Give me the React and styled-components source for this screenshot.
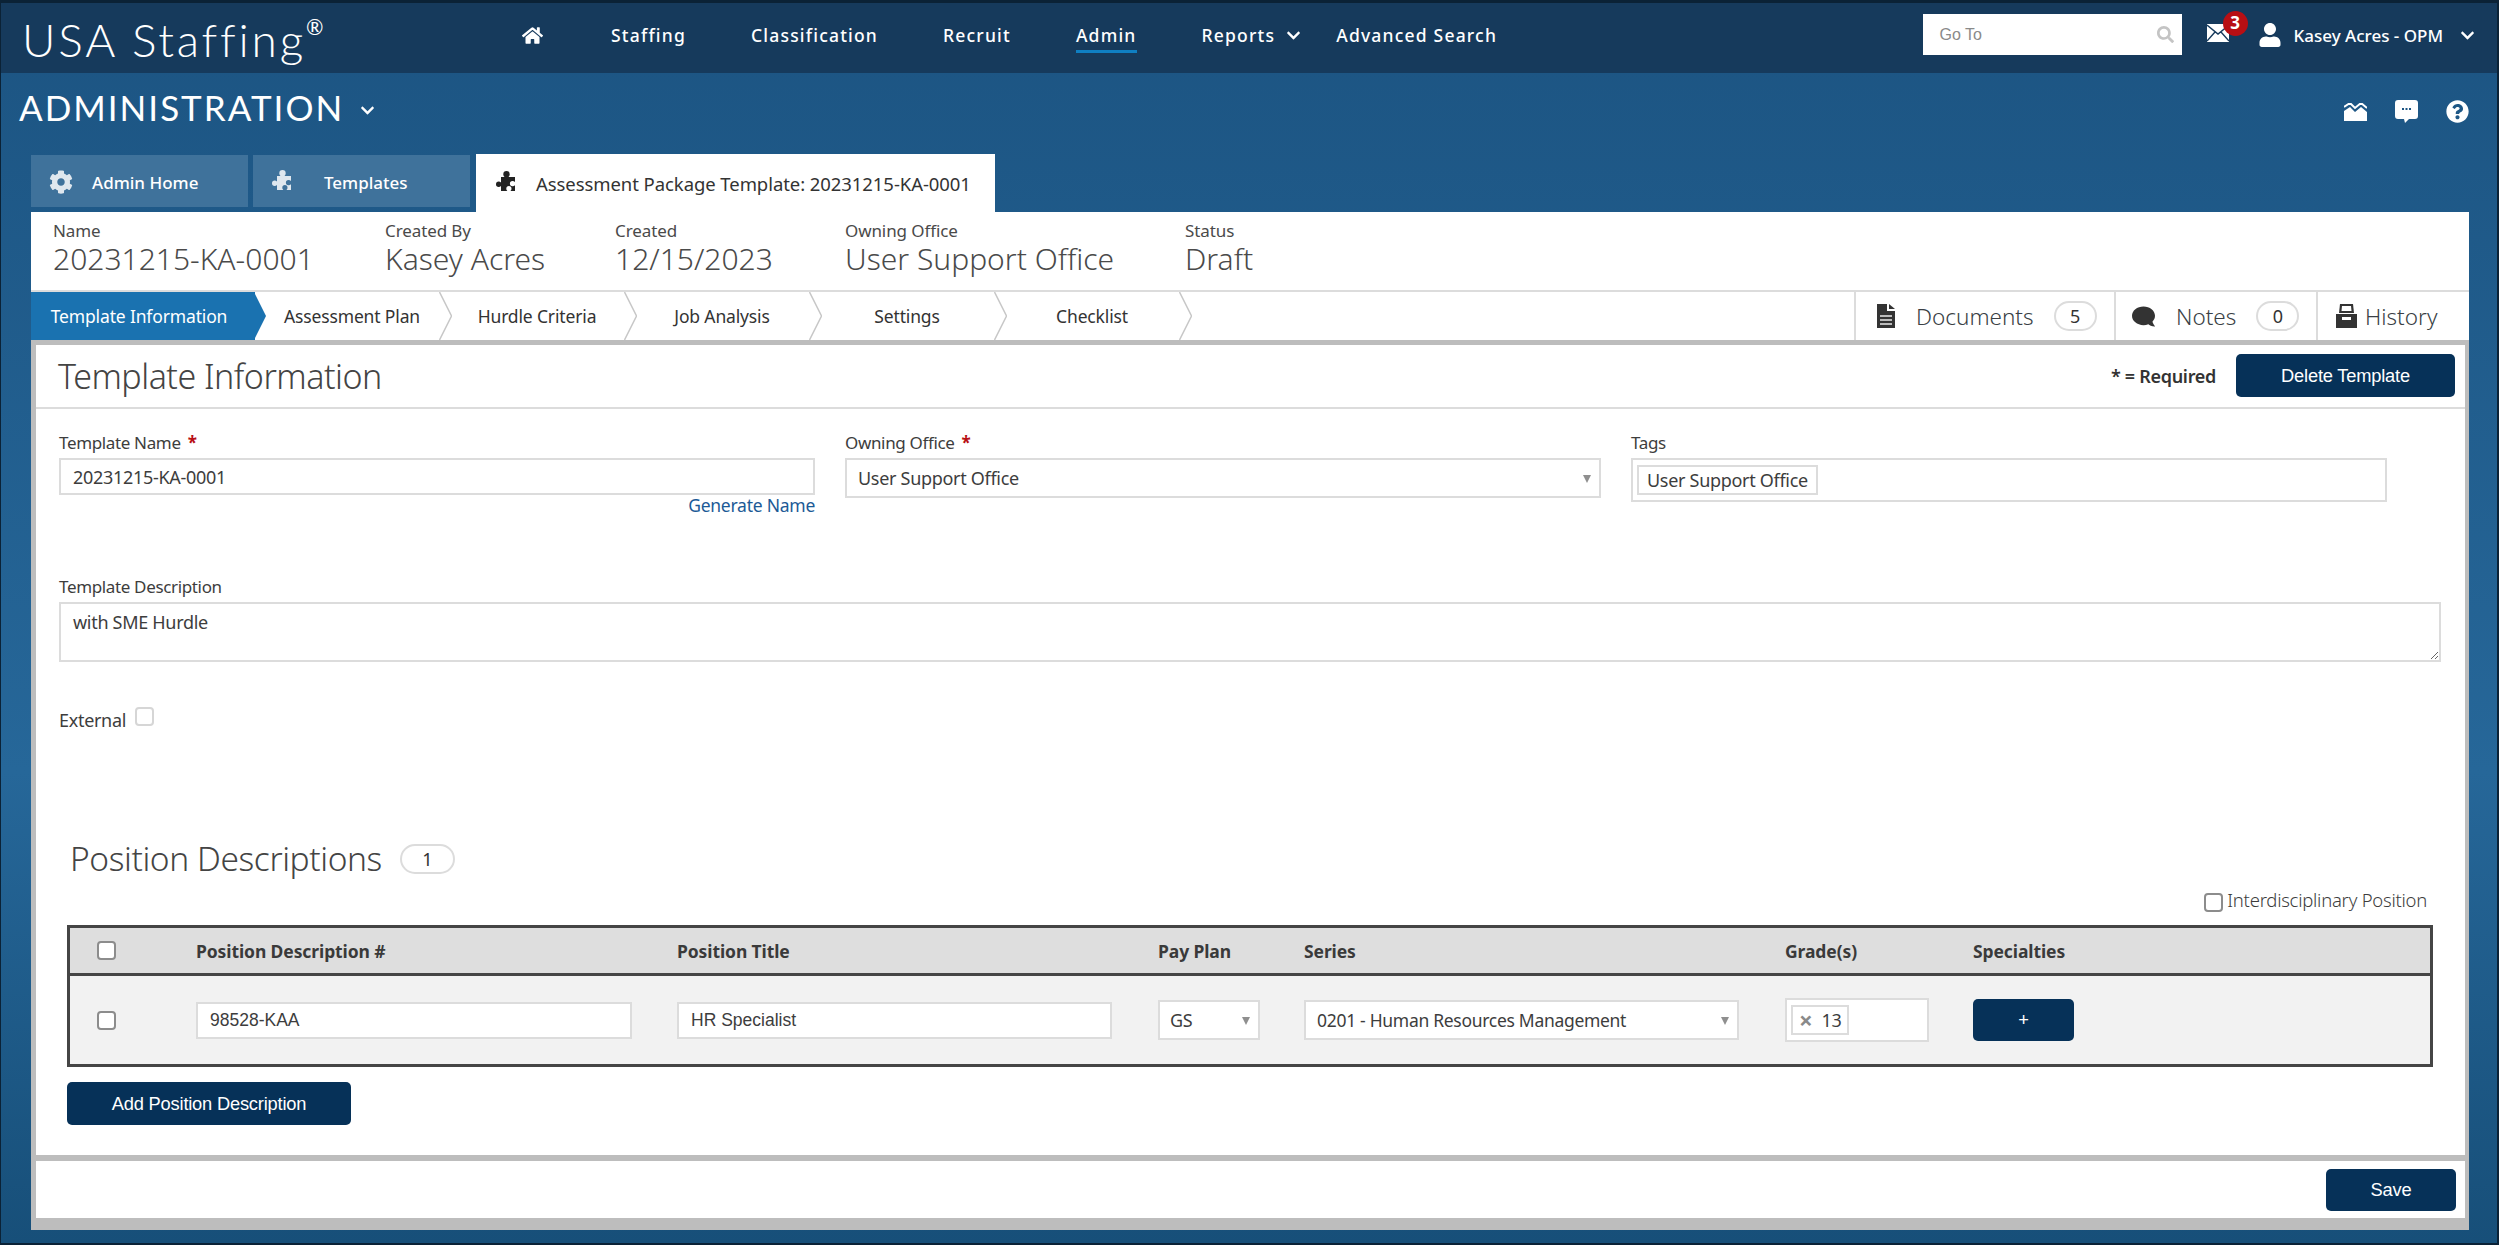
import styled, { createGlobalStyle } from "styled-components";
import {
  FaHome,
  FaCog,
  FaUser,
  FaChevronDown,
  FaSearch,
  FaComment,
  FaQuestionCircle,
} from "react-icons/fa";

const UI_FONT = `"Noto Sans", "Open Sans", sans-serif`;
const ARIAL = `"Liberation Sans", Arial, sans-serif`;
const TABLE_COLUMNS = "126px 481px 481px 146px 481px 188px 1fr";

const navLinks = ["Staffing", "Classification", "Recruit", "Admin"];
const steps = [
  "Assessment Plan",
  "Hurdle Criteria",
  "Job Analysis",
  "Settings",
  "Checklist",
];
const summary = [
  { label: "Name", value: "20231215-KA-0001", width: 332 },
  { label: "Created By", value: "Kasey Acres", width: 230 },
  { label: "Created", value: "12/15/2023", width: 230 },
  { label: "Owning Office", value: "User Support Office", width: 340 },
  { label: "Status", value: "Draft", width: 200 },
];

const GlobalStyle = createGlobalStyle`
  html, body {
    margin: 0;
    padding: 0;
    background: #0b2236;
  }
  * {
    box-sizing: border-box;
  }
`;

const Frame = styled.div`
  width: 2499px;
  height: 1245px;
  display: flex;
  flex-direction: column;
  overflow: hidden;
  border-style: solid;
  border-color: #0b2236;
  border-width: 3px 2px 2px 1px;
  font-family: ${UI_FONT};
  color: #333;
  background: linear-gradient(
    180deg,
    #1c5482 0%,
    #266799 62%,
    #174f79 100%
  );
`;

const Header = styled.header`
  flex: 0 0 70px;
  display: flex;
  align-items: flex-start;
  background: #163a5c;
  color: #fff;
`;

const Logo = styled.div`
  width: 521px;
  padding: 10px 0 0 21px;
  font-family: "Lato", sans-serif;
  font-weight: 300;
  font-size: 46px;
  line-height: 54px;
  letter-spacing: 2.8px;
  white-space: nowrap;

  sup {
    font-size: 21px;
    font-weight: 400;
    line-height: 0;
    letter-spacing: 0;
    vertical-align: 22px;
  }
`;

const Nav = styled.nav`
  display: flex;
  gap: 65px;
  margin-top: 18px;
`;

const NavItem = styled.a`
  display: flex;
  align-items: center;
  gap: 11px;
  height: 32px;
  padding-bottom: 1px;
  margin-right: ${(p) => p.$pull || 0}px;
  border-bottom: 3px solid ${(p) => (p.$active ? "#0f7fc2" : "transparent")};
  font-size: 17.5px;
  font-weight: 500;
  letter-spacing: 1.2px;
  white-space: nowrap;

  svg {
    font-size: ${(p) => p.$iconSize || "15px"};
  }
`;

const HeaderRight = styled.div`
  margin-left: auto;
  display: flex;
  align-items: flex-start;
  padding-right: 22px;
`;

const GoToBox = styled.div`
  width: 259px;
  height: 41px;
  margin-top: 11px;
  padding: 0 8px 0 17px;
  display: flex;
  align-items: center;
  justify-content: space-between;
  background: #fff;
  color: #8a8a8a;
  font-family: ${ARIAL};
  font-size: 16px;

  svg {
    font-size: 17px;
    color: #c4c4c4;
  }
`;

const MailIcon = styled.div`
  position: relative;
  width: 22px;
  height: 18px;
  margin: 21px 29px 0 25px;
`;

const Badge = styled.span`
  position: absolute;
  top: -13px;
  left: 16px;
  width: 25px;
  height: 25px;
  border-radius: 50%;
  background: #b80f14;
  color: #fff;
  font-size: 17px;
  font-weight: 700;
  line-height: 24px;
  text-align: center;
`;

const UserBlock = styled.div`
  display: flex;
  align-items: center;
  margin-top: 19px;
  height: 26px;
  font-size: 17px;
  font-weight: 500;
  white-space: nowrap;
`;

const UserName = styled.span`
  margin: 0 17px 0 12px;
`;

const TitleBar = styled.div`
  flex: 0 0 81px;
  display: flex;
  align-items: flex-start;
  justify-content: space-between;
  padding: 11px 19px 0 18px;
  color: #fff;
`;

const PageTitle = styled.h1`
  display: flex;
  align-items: center;
  gap: 16px;
  margin: 0;
  font-family: "Lato", sans-serif;
  font-size: 35px;
  font-weight: 400;
  line-height: 46px;
  letter-spacing: 2px;

  svg {
    font-size: 15px;
    margin-top: 6px;
  }
`;

const ToolIcons = styled.div`
  display: flex;
  align-items: center;
  gap: 28px;
  margin-top: 16px;
  margin-right: 9px;
`;

const TabRow = styled.div`
  flex: 0 0 58px;
  display: flex;
  align-items: flex-start;
  gap: 5px;
  padding-left: 30px;
`;

const Tab = styled.div`
  display: flex;
  align-items: center;
  width: ${(p) => (p.$active ? "519px" : "217px")};
  height: ${(p) => (p.$active ? "58px" : "52px")};
  margin-left: ${(p) => (p.$active ? "1px" : "0")};
  margin-top: ${(p) => (p.$active ? "0" : "1px")};
  padding: ${(p) => (p.$active ? "0 0 0 19px" : "2px 0 0 18px")};
  background: ${(p) => (p.$active ? "#fff" : "#3f729b")};
  color: ${(p) => (p.$active ? "#333" : "#fff")};
  font-size: ${(p) => (p.$active ? "18.5px" : "17px")};
  font-weight: ${(p) => (p.$active ? "400" : "500")};
  letter-spacing: ${(p) => (p.$active ? "-0.07px" : "0")};
  white-space: nowrap;

  svg {
    flex: none;
    font-size: 24px;
    color: ${(p) => (p.$active ? "#222" : "#dfe7ee")};
    margin-right: ${(p) => p.$iconGap || "19px"};
  }
`;

const Panel = styled.div`
  flex: 1;
  min-height: 0;
  margin: 0 28px 13px 30px;
  display: flex;
  flex-direction: column;
  background: #fff;
`;

const SummaryBar = styled.div`
  flex: 0 0 80px;
  display: flex;
  padding: 8px 0 0 22px;
  border-bottom: 2px solid #dcdcdc;
`;

const SummaryItem = styled.div`
  width: ${(p) => p.$width}px;
  color: #4a4a4a;
`;

const SummaryLabel = styled.div`
  font-size: 17px;
  line-height: 22px;
  letter-spacing: -0.1px;
`;

const SummaryValue = styled.div`
  font-size: 30px;
  font-weight: 300;
  line-height: 34px;
  white-space: nowrap;
`;

const StepBar = styled.div`
  flex: 0 0 48px;
  display: flex;
  align-items: stretch;
`;

const Step = styled.div`
  position: relative;
  width: ${(p) => (p.$active ? "224px" : "185px")};
  padding: ${(p) => (p.$active ? "0 8px 0 0" : "0 0 0 9px")};
  display: flex;
  align-items: center;
  justify-content: center;
  background: ${(p) => (p.$active ? "#1a72b0" : "transparent")};
  color: ${(p) => (p.$active ? "#fff" : "#333")};
  font-size: 17.5px;
  letter-spacing: -0.15px;
  white-space: nowrap;
`;

const StepArrow = styled.svg`
  position: absolute;
  top: 0;
  left: 100%;
  width: 13px;
  height: 48px;
  margin-left: -1px;
`;

const SideTabs = styled.div`
  margin-left: auto;
  display: flex;
`;

const SideTab = styled.div`
  width: ${(p) => p.$width}px;
  padding-left: ${(p) => p.$pad}px;
  display: flex;
  align-items: center;
  border-left: 2px solid #dcdcdc;
  font-size: 22.5px;
  font-weight: 300;
  color: #3a3f45;
  white-space: nowrap;

  svg {
    flex: none;
    color: #333;
  }
`;

const SideLabel = styled.span`
  margin-left: ${(p) => p.$gap}px;
`;

const NoteIcon = styled(FaComment)`
  transform: scaleX(-1);
`;

const Pill = styled.span`
  display: inline-flex;
  align-items: center;
  justify-content: center;
  width: ${(p) => p.$width || 43}px;
  height: 30px;
  margin-left: ${(p) => p.$gap || 20}px;
  border: 2px solid #dcdcdc;
  border-radius: 15px;
  background: #fff;
  color: #333;
  font-size: 18px;
  font-weight: 400;
`;

const MainBox = styled.main`
  flex: 1;
  min-height: 0;
  display: flex;
  flex-direction: column;
  border-style: solid;
  border-color: #bdbdbd;
  border-width: 5px 4px 0 5px;
`;

const SectionHead = styled.div`
  flex: 0 0 64px;
  display: flex;
  align-items: center;
  padding: 0 10px 1px 22px;
  border-bottom: 2px solid #dcdcdc;
`;

const SectionTitle = styled.h2`
  margin: 0;
  font-size: 34px;
  font-weight: 300;
  color: #444;
  letter-spacing: -0.5px;
`;

const Required = styled.span`
  margin-left: auto;
  margin-right: 20px;
  font-size: 18px;
  font-weight: 600;
  letter-spacing: -0.3px;
  color: #333;
`;

const DarkButton = styled.button`
  width: ${(p) => p.$width}px;
  height: ${(p) => p.$height || 43}px;
  padding: 0;
  border: none;
  border-radius: 5px;
  background: #063158;
  color: #fff;
  font-family: ${ARIAL};
  font-size: 18.3px;
  letter-spacing: -0.2px;
`;

const FormBody = styled.div`
  flex: 1;
  padding: 24px 24px 0 23px;
`;

const FieldRow = styled.div`
  display: grid;
  grid-template-columns: 756px 756px 756px;
  column-gap: 30px;
  height: 144px;
`;

const Label = styled.label`
  display: block;
  height: 25px;
  font-size: 17px;
  line-height: 20px;
  letter-spacing: -0.35px;
  color: #3d3d3d;
  white-space: nowrap;
`;

const Star = styled.span`
  margin-left: 3px;
  color: #b80f14;
  font-weight: 700;
`;

const TextInput = styled.input`
  display: block;
  width: 100%;
  height: 37px;
  padding: 0 12px;
  border: 2px solid #dcdcdc;
  outline: none;
  background: #fff;
  color: #3d3d3d;
  font-family: ${(p) => (p.$arial ? ARIAL : UI_FONT)};
  font-size: ${(p) => (p.$arial ? "17.5px" : "18px")};
  letter-spacing: ${(p) => (p.$arial ? "0" : "-0.3px")};
`;

const LinkRow = styled.div`
  margin-top: -2px;
  text-align: right;
  font-size: 17.5px;
  letter-spacing: -0.25px;
  color: #1c5a96;
`;

const SelectBox = styled.div`
  position: relative;
  display: flex;
  align-items: center;
  width: ${(p) => p.$width || "100%"};
  height: 40px;
  padding-left: ${(p) => p.$pad || 11}px;
  border: 2px solid #dcdcdc;
  background: #fff;
  color: #3d3d3d;
  font-size: ${(p) => p.$size || 18}px;
  letter-spacing: -0.3px;
  white-space: nowrap;
`;

const SelectCaret = styled.span`
  position: absolute;
  top: 50%;
  right: 8px;
  margin-top: -3px;
  width: 0;
  height: 0;
  border-left: 4px solid transparent;
  border-right: 4px solid transparent;
  border-top: 8px solid #8f8f8f;
`;

const TagsBox = styled.div`
  height: 44px;
  padding: 5px 4px;
  border: 2px solid #dcdcdc;
  background: #fff;
`;

const Chip = styled.span`
  display: inline-flex;
  align-items: center;
  gap: ${(p) => p.$gap || 8}px;
  height: 30px;
  padding: 0 ${(p) => p.$pad || 8}px;
  border: 2px solid #dcdcdc;
  background: #fff;
  color: #3d3d3d;
  font-size: 18px;
  letter-spacing: -0.3px;
  white-space: nowrap;
`;

const ChipRemove = styled.span`
  color: #8a8a8a;
  font-size: 24px;
  font-weight: 700;
  line-height: 1;
`;

const TextArea = styled.textarea`
  display: block;
  width: 2382px;
  height: 60px;
  padding: 6px 12px;
  border: 2px solid #dcdcdc;
  outline: none;
  background: #fff;
  color: #3d3d3d;
  font-family: ${UI_FONT};
  font-size: 18px;
  letter-spacing: -0.3px;
`;

const ExternalRow = styled.div`
  display: flex;
  align-items: flex-start;
  gap: 9px;
  margin-top: 45px;
  font-size: 18px;
  letter-spacing: -0.3px;
  color: #3d3d3d;

  span {
    margin-top: 1px;
  }
`;

const Check = styled.input.attrs({ type: "checkbox" })`
  appearance: none;
  flex: none;
  display: block;
  width: 19px;
  height: 19px;
  margin: 0;
  border: ${(p) => (p.$disabled ? "2px solid #d6d6d6" : "2px solid #8c8c8c")};
  border-radius: 4px;
  background: #fff;
`;

const PositionSection = styled.section`
  margin: 107px 0 0 8px;
  width: 2366px;
`;

const PositionHead = styled.div`
  display: flex;
  align-items: center;
  gap: 17px;
  height: 40px;
  padding-left: 3px;
`;

const PositionTitle = styled.h3`
  margin: 0 0 2px;
  font-size: 33.5px;
  font-weight: 300;
  letter-spacing: -0.4px;
  color: #444;
`;

const Interdisciplinary = styled.div`
  display: flex;
  align-items: center;
  justify-content: flex-end;
  gap: 4px;
  height: 20px;
  margin: 13px 0;
  padding-right: 6px;
  font-size: 18.5px;
  font-weight: 300;
  letter-spacing: -0.25px;
  color: #3d3d3d;

  span {
    margin-bottom: 5px;
  }
`;

const Table = styled.div`
  border: 3px solid #454545;
`;

const TableGrid = styled.div`
  display: grid;
  grid-template-columns: ${TABLE_COLUMNS};
  align-items: center;
`;

const TableHead = styled(TableGrid)`
  height: 48px;
  background: #dedede;
  border-bottom: 3px solid #454545;
  font-size: 17.5px;
  font-weight: 700;
  letter-spacing: -0.1px;
  color: #3a3a3a;
`;

const TableRow = styled(TableGrid)`
  height: 88px;
  background: #f2f2f2;
`;

const CheckCell = styled.div`
  padding-left: 27px;
`;

const CellInput = styled.div`
  width: ${(p) => p.$width}px;
`;

const GradeBox = styled.div`
  width: 144px;
  height: 44px;
  padding: 5px 4px;
  border: 2px solid #dcdcdc;
  background: #fff;
`;

const AddRow = styled.div`
  margin-top: 15px;
`;

const Footer = styled.footer`
  flex: 0 0 63px;
  display: flex;
  align-items: center;
  justify-content: flex-end;
  padding-right: 9px;
  border-top: 6px solid #bdbdbd;
`;

const BottomBand = styled.div`
  flex: 0 0 12px;
  background: #bdbdbd;
`;

function PuzzleGlyph() {
  return (
    <svg width="1em" height="1em" viewBox="0 0 24 24" fill="currentColor">
      <path d="M6 6h3.500c-1-1-1.200-2-1.200-2.800a3.200 3.200 0 0 1 6.400 0c0 .8-.2 1.800-1.200 2.800H20v5c-1-.8-1.800-1-2.500-1a2.600 2.600 0 0 0 0 5.200c.7 0 1.500-.2 2.500-1v5.800h-4.500c.8-1 1-1.800 1-2.300a2.600 2.600 0 0 0-5.200 0c0 .5.2 1.300 1 2.300H6v-5c-1 .8-1.700 1-2.300 1a2.700 2.700 0 0 1 0-5.400c.6 0 1.300.2 2.300 1z" />
    </svg>
  );
}

function MailGlyph() {
  return (
    <svg width="22" height="18" viewBox="0 0 22 18">
      <rect x="0" y="0" width="22" height="18" fill="#fff" />
      <path
        d="M0 1l11 9 11-9M0 17l8-9M22 17l-8-9"
        fill="none"
        stroke="#163a5c"
        strokeWidth="1.4"
      />
    </svg>
  );
}

function ChartGlyph() {
  return (
    <svg width="23" height="18" viewBox="0 0 23 18">
      <path d="M0 8l6-4 5 5 6-5 6 5v9H0z" fill="#fff" />
      <path
        d="M0 4l6-4 5 5 6-5 6 5"
        fill="none"
        stroke="#fff"
        strokeWidth="2"
      />
    </svg>
  );
}

function BubbleGlyph() {
  return (
    <svg width="23" height="23" viewBox="0 0 23 23">
      <path
        d="M3 0h17a3 3 0 0 1 3 3v13a3 3 0 0 1-3 3h-6l-4 4-1-4H3a3 3 0 0 1-3-3V3a3 3 0 0 1 3-3z"
        fill="#fff"
      />
      <path d="M7 8h2v2H7zM10.500 8h2v2h-2zM14 8h2v2h-2z" fill="#1c5482" />
    </svg>
  );
}

function DocumentGlyph() {
  return (
    <svg width="18" height="24" viewBox="0 0 18 24">
      <path d="M0 0h10v7h8v17H0z" fill="#333" />
      <path d="M12 0l6 5h-6z" fill="#333" />
      <path d="M3 11h12v2H3zM3 15h12v2H3zM3 19h12v2H3z" fill="#bbb" />
    </svg>
  );
}

function DrawerGlyph() {
  return (
    <svg width="21" height="24" viewBox="0 0 21 24">
      <path d="M4 0h13l1 9H3z" fill="#333" />
      <path d="M6 2h9l.5 5h-10z" fill="#fff" />
      <path d="M0 10h21v14H0z" fill="#333" />
      <path d="M6 13h9v3H6z" fill="#fff" />
    </svg>
  );
}

export default function App() {
  return (
    <>
      <GlobalStyle />
      <Frame>
        <Header>
          <Logo>
            USA Staffing<sup>®</sup>
          </Logo>
          <Nav>
            <NavItem $iconSize="21px" $pull={3}>
              <FaHome />
            </NavItem>
            {navLinks.map((link) => (
              <NavItem key={link} $active={link === "Admin"}>
                {link}
              </NavItem>
            ))}
            <NavItem $pull={-30}>
              Reports
              <FaChevronDown />
            </NavItem>
            <NavItem>Advanced Search</NavItem>
          </Nav>
          <HeaderRight>
            <GoToBox>
              Go To
              <FaSearch />
            </GoToBox>
            <MailIcon>
              <MailGlyph />
              <Badge>3</Badge>
            </MailIcon>
            <UserBlock>
              <FaUser size={24} />
              <UserName>Kasey Acres - OPM</UserName>
              <FaChevronDown size={15} />
            </UserBlock>
          </HeaderRight>
        </Header>

        <TitleBar>
          <PageTitle>
            ADMINISTRATION
            <FaChevronDown />
          </PageTitle>
          <ToolIcons>
            <ChartGlyph />
            <BubbleGlyph />
            <FaQuestionCircle size={23} />
          </ToolIcons>
        </TitleBar>

        <TabRow>
          <Tab>
            <FaCog />
            Admin Home
          </Tab>
          <Tab $iconGap="29px">
            <PuzzleGlyph />
            Templates
          </Tab>
          <Tab $active $iconGap="17px">
            <PuzzleGlyph />
            Assessment Package Template: 20231215-KA-0001
          </Tab>
        </TabRow>

        <Panel>
          <SummaryBar>
            {summary.map((item) => (
              <SummaryItem key={item.label} $width={item.width}>
                <SummaryLabel>{item.label}</SummaryLabel>
                <SummaryValue>{item.value}</SummaryValue>
              </SummaryItem>
            ))}
          </SummaryBar>

          <StepBar>
            <Step $active>
              Template Information
              <StepArrow viewBox="0 0 13 48">
                <path d="M0 0l12 24L0 48z" fill="#1a72b0" />
              </StepArrow>
            </Step>
            {steps.map((step) => (
              <Step key={step}>
                {step}
                <StepArrow viewBox="0 0 13 48">
                  <path
                    d="M0.500 0l12 24-12 24"
                    fill="none"
                    stroke="#c8c8c8"
                    strokeWidth="1.500"
                  />
                </StepArrow>
              </Step>
            ))}
            <SideTabs>
              <SideTab $width={260} $pad={21}>
                <DocumentGlyph />
                <SideLabel $gap={21}>Documents</SideLabel>
                <Pill>5</Pill>
              </SideTab>
              <SideTab $width={202} $pad={16}>
                <NoteIcon size={23} />
                <SideLabel $gap={21}>Notes</SideLabel>
                <Pill>0</Pill>
              </SideTab>
              <SideTab $width={153} $pad={18}>
                <DrawerGlyph />
                <SideLabel $gap={8}>History</SideLabel>
              </SideTab>
            </SideTabs>
          </StepBar>

          <MainBox>
            <SectionHead>
              <SectionTitle>Template Information</SectionTitle>
              <Required>* = Required</Required>
              <DarkButton $width={219}>Delete Template</DarkButton>
            </SectionHead>

            <FormBody>
              <FieldRow>
                <div>
                  <Label>
                    Template Name <Star>*</Star>
                  </Label>
                  <TextInput defaultValue="20231215-KA-0001" />
                  <LinkRow>Generate Name</LinkRow>
                </div>
                <div>
                  <Label>
                    Owning Office <Star>*</Star>
                  </Label>
                  <SelectBox>
                    User Support Office
                    <SelectCaret />
                  </SelectBox>
                </div>
                <div>
                  <Label>Tags</Label>
                  <TagsBox>
                    <Chip>User Support Office</Chip>
                  </TagsBox>
                </div>
              </FieldRow>

              <Label>Template Description</Label>
              <TextArea defaultValue="with SME Hurdle" />

              <ExternalRow>
                <span>External</span>
                <Check $disabled disabled />
              </ExternalRow>

              <PositionSection>
                <PositionHead>
                  <PositionTitle>Position Descriptions</PositionTitle>
                  <Pill $width={55} $gap={1}>
                    1
                  </Pill>
                </PositionHead>
                <Interdisciplinary>
                  <Check />
                  <span>Interdisciplinary Position</span>
                </Interdisciplinary>
                <Table>
                  <TableHead>
                    <CheckCell>
                      <Check />
                    </CheckCell>
                    <div>Position Description #</div>
                    <div>Position Title</div>
                    <div>Pay Plan</div>
                    <div>Series</div>
                    <div>Grade(s)</div>
                    <div>Specialties</div>
                  </TableHead>
                  <TableRow>
                    <CheckCell>
                      <Check />
                    </CheckCell>
                    <CellInput $width={436}>
                      <TextInput $arial defaultValue="98528-KAA" />
                    </CellInput>
                    <CellInput $width={435}>
                      <TextInput $arial defaultValue="HR Specialist" />
                    </CellInput>
                    <SelectBox $width="102px" $pad={10}>
                      GS
                      <SelectCaret />
                    </SelectBox>
                    <SelectBox $width="435px" $size={17.5}>
                      0201 - Human Resources Management
                      <SelectCaret />
                    </SelectBox>
                    <GradeBox>
                      <Chip $pad={6} $gap={9}>
                        <ChipRemove>×</ChipRemove>
                        13
                      </Chip>
                    </GradeBox>
                    <DarkButton $width={101} $height={42}>
                      +
                    </DarkButton>
                  </TableRow>
                </Table>
                <AddRow>
                  <DarkButton $width={284}>Add Position Description</DarkButton>
                </AddRow>
              </PositionSection>
            </FormBody>

            <Footer>
              <DarkButton $width={130} $height={42}>
                Save
              </DarkButton>
            </Footer>
          </MainBox>
          <BottomBand />
        </Panel>
      </Frame>
    </>
  );
}
